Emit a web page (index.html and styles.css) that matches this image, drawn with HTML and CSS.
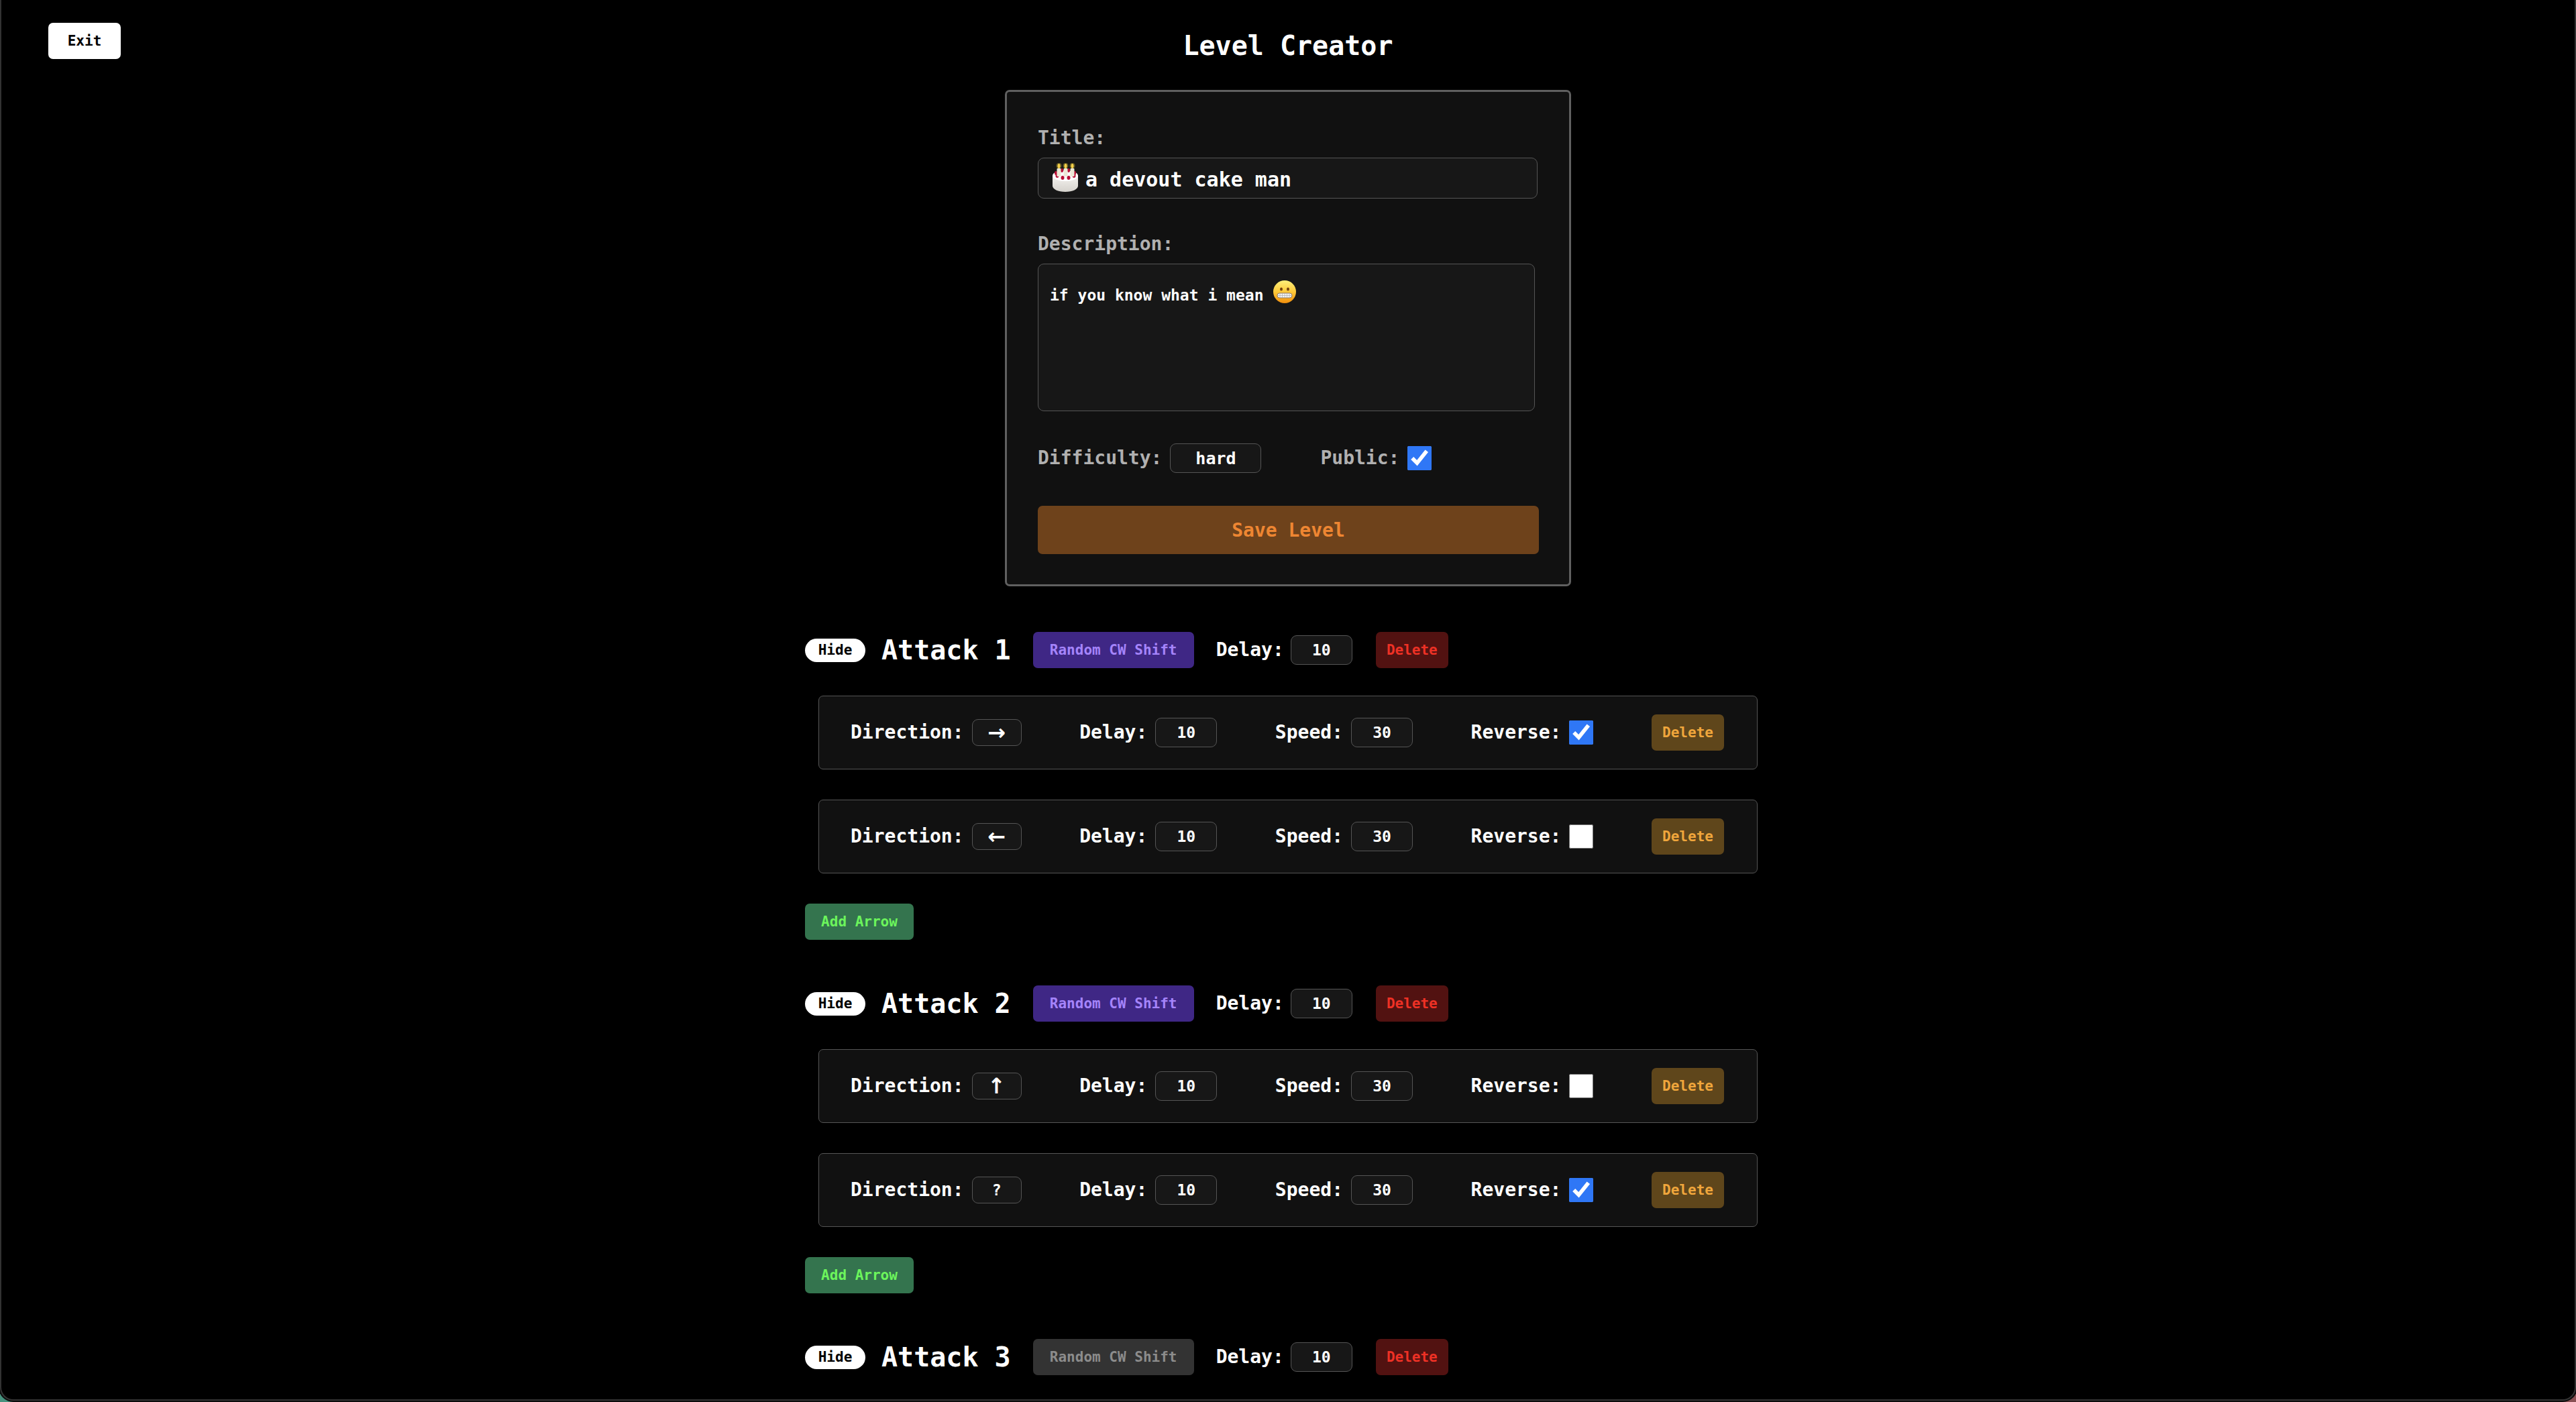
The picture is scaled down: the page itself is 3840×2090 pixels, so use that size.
FILE: index.html
```html
<!DOCTYPE html>
<html lang="en">
<head>
<meta charset="utf-8">
<title>Level Creator</title>
<link rel="stylesheet" href="styles.css">
</head>
<body>
<div class="window">
  <header class="topbar">
    <button class="btn exit" type="button">Exit</button>
    <h1 class="page-title">Level Creator</h1>
  </header>

  <form class="settings">
    <label class="caption" for="title">Title:</label>
    <div class="with-emoji">
      <input class="box title-input" id="title" type="text" value="a devout cake man">
      <svg class="emoji cake" viewBox="0 0 40 44" aria-hidden="true">
        <defs>
          <linearGradient id="side" x1="0" y1="0" x2="0" y2="1">
            <stop offset="0" stop-color="#f4f2ef"/>
            <stop offset="1" stop-color="#d5d2cc"/>
          </linearGradient>
        </defs>
        <path d="M1 19v15c0 5 8 9 19 9s19-4 19-9V19z" fill="url(#side)"/>
        <ellipse cx="20" cy="19" rx="19" ry="8" fill="#fff"/>
        <g fill="#b80f35">
          <ellipse cx="15" cy="11" rx="2" ry="3"/><ellipse cx="25" cy="11" rx="2" ry="3"/>
          <ellipse cx="6" cy="15" rx="2" ry="3"/><ellipse cx="34" cy="15" rx="2" ry="3"/>
          <ellipse cx="8" cy="19" rx="2.5" ry="3"/><ellipse cx="33" cy="19" rx="2.5" ry="3"/>
          <ellipse cx="16" cy="22" rx="2.5" ry="3"/><ellipse cx="25" cy="22" rx="2.5" ry="3"/>
        </g>
        <g fill="#ece8d6">
          <rect x="7.500" y="8" width="6" height="12" rx="1"/>
          <rect x="17.500" y="8" width="6" height="12" rx="1"/>
          <rect x="27.500" y="8" width="6" height="12" rx="1"/>
        </g>
        <g fill="#635a24">
          <circle cx="10.500" cy="4" r="4"/><circle cx="20.500" cy="4" r="4"/><circle cx="30.500" cy="4" r="4"/>
        </g>
        <g fill="#f5d04a">
          <ellipse cx="10.500" cy="4.500" rx="2" ry="3.500"/><ellipse cx="20.500" cy="4.500" rx="2" ry="3.500"/><ellipse cx="30.500" cy="4.500" rx="2" ry="3.500"/>
        </g>
      </svg>
    </div>
    <label class="caption" for="description">Description:</label>
    <div class="with-emoji">
      <textarea class="box description" id="description">if you know what i mean</textarea>
      <svg class="emoji grimace" viewBox="0 0 34 34" aria-hidden="true">
        <defs>
          <linearGradient id="face" x1="0" y1="0" x2="0" y2="1">
            <stop offset="0" stop-color="#fff07a"/>
            <stop offset=".5" stop-color="#fdc93a"/>
            <stop offset="1" stop-color="#f18f0c"/>
          </linearGradient>
        </defs>
        <circle cx="17" cy="17" r="17" fill="url(#face)"/>
        <ellipse cx="12" cy="13" rx="2" ry="2.500" fill="#73420e"/>
        <ellipse cx="22" cy="13" rx="2" ry="2.500" fill="#73420e"/>
        <rect x="6" y="19" width="22" height="7" rx="3.500" fill="#f4f4f4" stroke="#8d7960"/>
        <path d="M6 22.500h22M10 19v7M13.500 19v7M17 19v7M20.500 19v7M24 19v7" stroke="#aaa" stroke-width=".7"/>
      </svg>
    </div>
    <div class="options">
      <label class="field">Difficulty: <select class="box difficulty"><option>hard</option></select></label>
      <label class="field">Public: <input class="check" type="checkbox" checked></label>
    </div>
    <button class="btn save" type="button">Save Level</button>
  </form>

  <main class="attacks">
    <section class="attack">
      <div class="attack-head">
        <button class="hide" type="button">Hide</button>
        <h2 class="attack-title">Attack 1</h2>
        <button class="btn random" type="button">Random CW Shift</button>
        <label class="field">Delay: <input class="box number" type="text" value="10"></label>
        <button class="btn remove" type="button">Delete</button>
      </div>
      <div class="arrow">
        <label class="field">Direction: <select class="box direction"><option>→</option></select></label>
        <label class="field">Delay: <input class="box number" type="text" value="10"></label>
        <label class="field">Speed: <input class="box number" type="text" value="30"></label>
        <label class="field">Reverse: <input class="check" type="checkbox" checked></label>
        <button class="btn remove-arrow" type="button">Delete</button>
      </div>
      <div class="arrow">
        <label class="field">Direction: <select class="box direction"><option>←</option></select></label>
        <label class="field">Delay: <input class="box number" type="text" value="10"></label>
        <label class="field">Speed: <input class="box number" type="text" value="30"></label>
        <label class="field">Reverse: <input class="check" type="checkbox"></label>
        <button class="btn remove-arrow" type="button">Delete</button>
      </div>
      <button class="btn add" type="button">Add Arrow</button>
    </section>

    <section class="attack">
      <div class="attack-head">
        <button class="hide" type="button">Hide</button>
        <h2 class="attack-title">Attack 2</h2>
        <button class="btn random" type="button">Random CW Shift</button>
        <label class="field">Delay: <input class="box number" type="text" value="10"></label>
        <button class="btn remove" type="button">Delete</button>
      </div>
      <div class="arrow">
        <label class="field">Direction: <select class="box direction"><option>↑</option></select></label>
        <label class="field">Delay: <input class="box number" type="text" value="10"></label>
        <label class="field">Speed: <input class="box number" type="text" value="30"></label>
        <label class="field">Reverse: <input class="check" type="checkbox"></label>
        <button class="btn remove-arrow" type="button">Delete</button>
      </div>
      <div class="arrow">
        <label class="field">Direction: <select class="box direction unknown"><option>?</option></select></label>
        <label class="field">Delay: <input class="box number" type="text" value="10"></label>
        <label class="field">Speed: <input class="box number" type="text" value="30"></label>
        <label class="field">Reverse: <input class="check" type="checkbox" checked></label>
        <button class="btn remove-arrow" type="button">Delete</button>
      </div>
      <button class="btn add" type="button">Add Arrow</button>
    </section>

    <section class="attack">
      <div class="attack-head">
        <button class="hide" type="button">Hide</button>
        <h2 class="attack-title">Attack 3</h2>
        <button class="btn random" type="button" disabled>Random CW Shift</button>
        <label class="field">Delay: <input class="box number" type="text" value="10"></label>
        <button class="btn remove" type="button">Delete</button>
      </div>
    </section>
  </main>
</div>
</body>
</html>
```
FILE: styles.css
```css
* {
  box-sizing: border-box;
}

html {
  background: linear-gradient(90deg, #47937f, #8a5054);
}

body,
button,
input,
select,
textarea {
  font-family: "DejaVu Sans Mono", monospace;
  font-weight: 700;
}

body {
  margin: 0;
  padding-bottom: 2px;
  color: #fff;
}

.window {
  min-height: calc(100vh - 2px);
  padding-bottom: 32px;
  background: #000;
  border: 2px solid #333;
  border-top: 0;
  border-radius: 0 0 20px 20px;
  box-shadow: 0 0 0 2px #0c0c0c;
}

.topbar {
  display: grid;
  grid-template-columns: 1fr auto 1fr;
  align-items: start;
  height: 134px;
  padding: 34px 70px 0;
}

.page-title {
  margin: 0;
  padding-top: 10px;
  font-size: 40px;
  line-height: 48px;
}

.btn {
  height: 54px;
  padding: 0;
  border: 0;
  border-radius: 7px;
  font-size: 21px;
}

.exit {
  width: 108px;
  background: #fff;
  color: #000;
}

.settings {
  width: 844px;
  margin: 0 auto;
  padding: 45px 45px 45px 46px;
  display: flex;
  flex-direction: column;
  background: #111;
  border: 3px solid #606060;
  border-radius: 7px;
  color: #b0b0b0;
}

.caption {
  font-size: 28px;
  line-height: 48px;
}

.with-emoji {
  position: relative;
  display: flex;
}

.emoji {
  position: absolute;
}

.cake {
  left: 21px;
  top: 13px;
  width: 40px;
  height: 44px;
}

.grimace {
  left: 351px;
  top: 30px;
  width: 34px;
  height: 34px;
}

.box {
  margin: 0;
  background: #171717;
  border: 1px solid #555;
  border-radius: 9px;
  color: #fff;
  outline: 0;
}

.title-input {
  width: 745px;
  height: 61px;
  margin: 5px 0 44px;
  padding: 4px 18px 0 70px;
  font-size: 30px;
}

.description {
  width: 741px;
  height: 220px;
  margin: 5px 0 48px;
  padding: 31px 17px;
  font-size: 23px;
  line-height: 30px;
  resize: none;
}

.options {
  display: flex;
  gap: 88px;
}

.field {
  display: flex;
  align-items: center;
  gap: 12px;
  font-size: 28px;
  line-height: 34px;
}

select.box {
  appearance: none;
  text-align: center;
  text-align-last: center;
  padding: 0;
}

.difficulty {
  width: 136px;
  height: 44px;
  font-size: 25px;
}

.check {
  width: 36px;
  height: 36px;
  margin: 0;
  accent-color: #2f77f6;
}

.save {
  height: 72px;
  margin-top: 49px;
  background: #6e421b;
  color: #ee8632;
  font-size: 28px;
}

.attacks {
  width: 1440px;
  margin: 68px auto 0;
  display: flex;
  flex-direction: column;
  gap: 68px;
}

.attack {
  display: flex;
  flex-direction: column;
  align-items: flex-start;
  gap: 45px;
}

.attack-head {
  display: flex;
  align-items: center;
  margin-bottom: -4px;
}

.hide {
  width: 90px;
  height: 35px;
  padding: 0;
  border: 0;
  border-radius: 18px;
  background: #fff;
  color: #000;
  font-size: 21px;
}

.attack-title {
  margin: 0 33px 0 24px;
  font-size: 40px;
  line-height: 48px;
}

.random {
  width: 240px;
  margin-right: 33px;
  background: #3f2785;
  color: #a584fb;
}

.random:disabled {
  background: #333;
  color: #8c8c8c;
}

.number {
  width: 92px;
  height: 44px;
  padding: 0;
  font-size: 23px;
  text-align: center;
}

.attack-head .field {
  gap: 10px;
}

.remove {
  width: 108px;
  margin-left: 35px;
  background: #521211;
  color: #ee3125;
}

.arrow {
  width: 1400px;
  height: 110px;
  margin: 0 20px;
  padding: 0 49px 0 47px;
  display: flex;
  align-items: center;
  justify-content: space-between;
  background: #111;
  border: 1px solid #555;
  border-radius: 7px;
}

.direction {
  width: 74px;
  height: 40px;
  font-family: "DejaVu Sans", sans-serif;
  font-size: 32px;
  line-height: 36px;
}

.unknown {
  font-family: "DejaVu Sans Mono", monospace;
  font-size: 23px;
}

.remove-arrow {
  width: 108px;
  background: #5f461b;
  color: #f0a63c;
}

.add {
  width: 162px;
  background: #34744e;
  color: #6cf55c;
}
```
